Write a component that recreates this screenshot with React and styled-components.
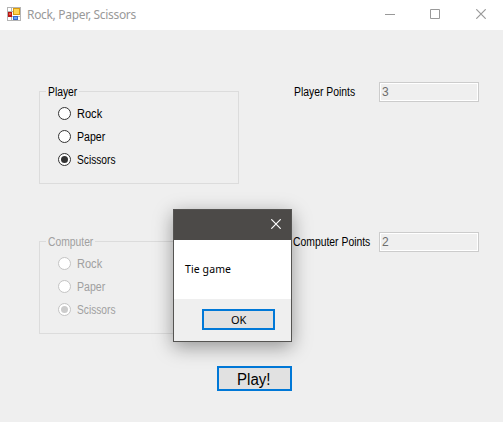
import React from 'react';
import styled, { createGlobalStyle } from 'styled-components';

const GlobalStyle = createGlobalStyle`
  * { box-sizing: border-box; }
  body { margin: 0; overflow: hidden; }
`;

const Window = styled.div`
  position: relative;
  width: 503px;
  height: 422px;
  display: flex;
  flex-direction: column;
  background: #efefef;
  color: #000;
  font: 12px/14px "Liberation Sans", Arial, sans-serif;
`;

const TitleBar = styled.header`
  display: flex;
  align-items: center;
  height: 30px;
  flex: none;
  padding: 0 0 2px 7px;
  background: #fff;
`;

const Title = styled.h1`
  flex: 1;
  margin: 1px 0 0 6px;
  font: 12px/16px "Noto Sans", sans-serif;
  letter-spacing: -0.32px;
  color: #999;
`;

const CaptionButton = styled.button`
  display: flex;
  align-items: center;
  justify-content: center;
  width: ${p => p.$width || 45}px;
  height: 28px;
  padding: 0 0 0 ${p => p.$inset || 0}px;
  border: 0;
  background: transparent;
`;

const Condensed = styled.span`
  display: inline-block;
  white-space: nowrap;
  transform: scaleX(${p => p.$scale});
  transform-origin: ${p => p.$origin || 'left'} center;
`;

const Form = styled.main`
  display: flex;
  flex-direction: column;
  padding: 52px 24px 0 39px;
`;

const Section = styled.section`
  display: flex;
  justify-content: space-between;
  height: 150px;
`;

const GroupBox = styled.fieldset`
  width: 200px;
  height: 99px;
  margin: 3px 0 0;
  min-width: 0;
  padding: 0 0 0 18px;
  border: 1px solid #dcdcdc;
  color: ${p => (p.disabled ? '#a0a0a0' : '#000')};
`;

const Legend = styled.legend`
  margin-left: -12px;
  width: ${p => p.$width}px;
  height: 12px;
  line-height: 14px;
  padding: 0 1.5px;
`;

const Options = styled.div`
  padding-top: 5px;
`;

const Option = styled.label`
  display: flex;
  align-items: center;
  gap: 6px;
  height: 23px;
`;

const Radio = styled.span`
  display: grid;
  place-items: center;
  width: 13px;
  height: 13px;
  border: 1px solid ${p => (p.$disabled ? '#c4c4c4' : '#333')};
  border-radius: 50%;
  background: #fff;

  &::after {
    content: '';
    width: 7px;
    height: 7px;
    border-radius: 50%;
    background: ${p => (p.$checked ? (p.$disabled ? '#ccc' : '#333') : 'transparent')};
  }
`;

const Score = styled.div`
  display: flex;
  width: 186px;
  height: 20px;
`;

const ScoreLabel = styled.span`
  width: 86px;
  padding: 3px 0 0 ${p => p.$indent || 0}px;
`;

const ScoreField = styled.output`
  width: 100px;
  height: 20px;
  padding: 2px;
  border: 1px solid #ccc;
  box-shadow: inset 0 0 0 1px #fff;
  color: #6d6d6d;
`;

const PushButton = styled.button`
  display: flex;
  align-items: center;
  justify-content: center;
  width: ${p => p.$width}px;
  height: ${p => p.$height}px;
  padding: 0;
  border: 2px solid #0078d7;
  background: #e1e1e1;
  color: #000;
`;

const PlayButton = styled(PushButton)`
  margin: -16px 0 0 178px;
  padding: 2px 2px 0 0;
  font: 16px/18px "Liberation Sans", Arial, sans-serif;
`;

const Dialog = styled.div`
  position: absolute;
  left: 173px;
  top: 209px;
  width: 119px;
  height: 133px;
  display: flex;
  flex-direction: column;
  border: 1px solid #555452;
  background: #efefef;
  box-shadow: 0 5px 18px rgba(0, 0, 0, 0.38);
`;

const DialogBar = styled.div`
  display: flex;
  justify-content: flex-end;
  height: 30px;
  background: #4c4a48;
`;

const Message = styled.p`
  height: 59px;
  margin: 0;
  padding: 22px 0 0 11px;
  background: #fff;
  font: 10.5px/15px "Noto Sans", sans-serif;
  letter-spacing: 0.1px;
`;

const DialogFooter = styled.div`
  display: flex;
  justify-content: flex-end;
  padding: 10px 16px 0 0;
`;

const OkButton = styled(PushButton)`
  font: 11px/15px "Noto Sans", sans-serif;
  letter-spacing: -0.3px;
`;

const AppIcon = () => (
  <svg width="14" height="14" viewBox="0 0 14 14" shapeRendering="crispEdges">
    <path d="M.5.5h13v13H.5zM4.5.5v13M.5 9.5h13M.5 4.5h5" fill="#fff" stroke="#b4b4b4" />
    <rect x="1" y="5" width="4" height="5" fill="#b81414" />
    <rect x="2" y="6" width="2" height="2" fill="#e45a3c" />
    <rect x="6" y="1" width="7" height="7" fill="#d89a10" />
    <rect x="7" y="2" width="5" height="5" fill="#ffd451" />
    <rect x="6" y="9" width="5" height="4" fill="#3568cc" />
    <rect x="7" y="10" width="3" height="2" fill="#6aa0f6" />
  </svg>
);

const Cross = ({ color }) => (
  <svg width="10" height="10" viewBox="0 0 10 10">
    <path d="M.3.3l9.4 9.4M9.7.3L.3 9.7" stroke={color} strokeWidth="1.2" />
  </svg>
);

const options = [
  { name: 'Rock', scale: 0.92 },
  { name: 'Paper', scale: 0.88 },
  { name: 'Scissors', scale: 0.85 },
];

const Choices = ({ title, legendWidth, disabled }) => (
  <GroupBox disabled={disabled}>
    <Legend $width={legendWidth}>
      <Condensed $scale={0.86}>{title}</Condensed>
    </Legend>
    <Options>
      {options.map(o => (
        <Option key={o.name}>
          <Radio $disabled={disabled} $checked={o.name === 'Scissors'} />
          <Condensed $scale={o.scale}>{o.name}</Condensed>
        </Option>
      ))}
    </Options>
  </GroupBox>
);

const Points = ({ label, indent, value }) => (
  <Score>
    <ScoreLabel $indent={indent}>
      <Condensed $scale={0.865}>{label}</Condensed>
    </ScoreLabel>
    <ScoreField>{value}</ScoreField>
  </Score>
);

export default function App() {
  return (
    <>
      <GlobalStyle />
      <Window>
        <TitleBar>
          <AppIcon />
          <Title>Rock, Paper, Scissors</Title>
          <CaptionButton>
            <svg width="10" height="10"><path d="M0 5.5h10" stroke="#999" /></svg>
          </CaptionButton>
          <CaptionButton>
            <svg width="10" height="10"><path d="M.5.5h9v9h-9z" fill="none" stroke="#999" /></svg>
          </CaptionButton>
          <CaptionButton $width={46} $inset={2}><Cross color="#999" /></CaptionButton>
        </TitleBar>
        <Form>
          <Section>
            <Choices title="Player" legendWidth={33} />
            <Points label="Player Points" indent={1} value="3" />
          </Section>
          <Section>
            <Choices title="Computer" legendWidth={49} disabled />
            <Points label="Computer Points" value="2" />
          </Section>
          <PlayButton $width={75} $height={25}>
            <Condensed $scale={0.94} $origin="center">Play!</Condensed>
          </PlayButton>
        </Form>
        <Dialog role="dialog">
          <DialogBar>
            <CaptionButton $width={30}><Cross color="#fff" /></CaptionButton>
          </DialogBar>
          <Message>Tie game</Message>
          <DialogFooter>
            <OkButton $width={73} $height={21}>OK</OkButton>
          </DialogFooter>
        </Dialog>
      </Window>
    </>
  );
}
